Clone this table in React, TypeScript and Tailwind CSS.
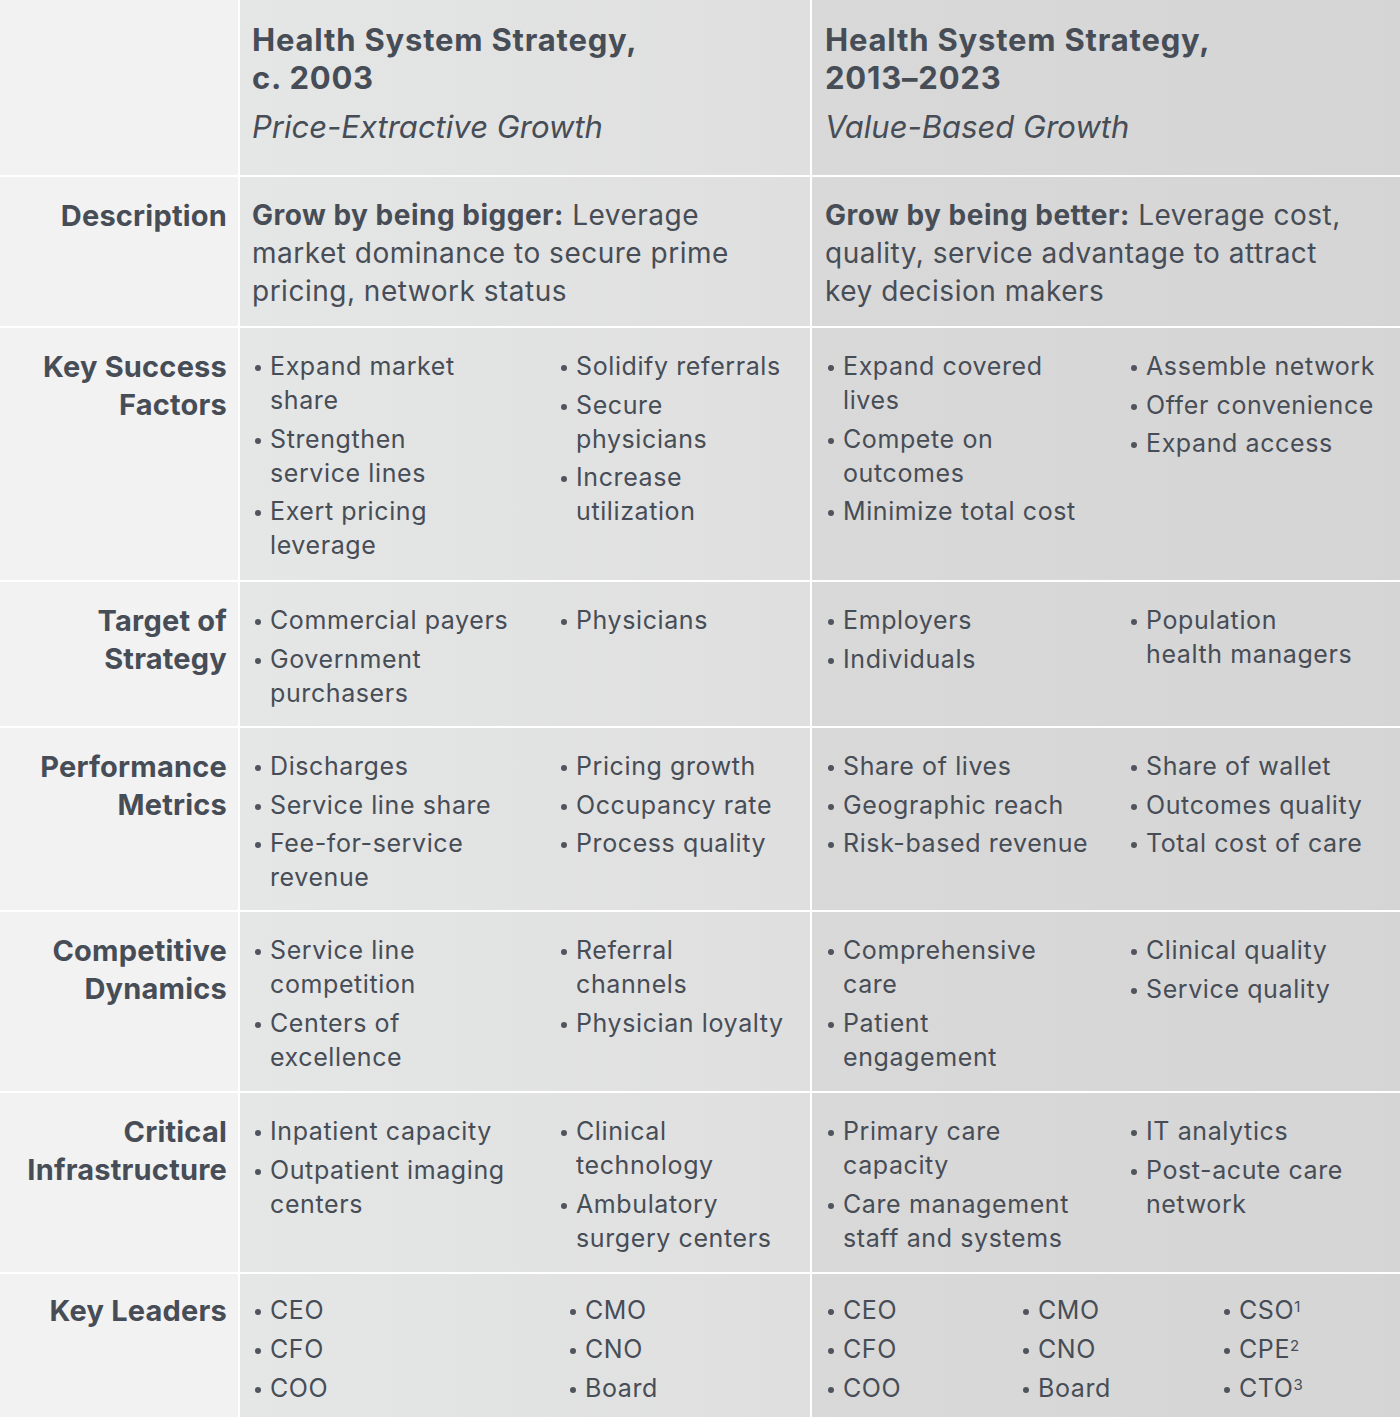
import React from "react";

const LABEL = "bg-[#f2f2f2]";
const COL1 = "bg-linear-to-r from-[#e5e6e6] to-[#dfdfdf]";
const COL2 = "bg-linear-to-r from-[#d9d9d9] to-[#d5d5d5]";

type Item = string[];

function Dot() {
  return (
    <div className="w-[18px] shrink-0">
      <div className="ml-[3px] mt-[16px] h-[6px] w-[6px] rounded-full bg-[#50555d]" />
    </div>
  );
}

function Bullets({ items }: { items: Item[] }) {
  return (
    <div className="flex flex-col gap-[4.5px]">
      {items.map((lines, i) => (
        <div key={i} className="flex">
          <Dot />
          <div>
            {lines.map((l) => (
              <div key={l} className="whitespace-nowrap">
                {l}
              </div>
            ))}
          </div>
        </div>
      ))}
    </div>
  );
}

function Label({ lines }: { lines: string[] }) {
  return (
    <div className={`${LABEL} pr-[11px] pt-[20px] text-right text-[29px] font-bold leading-[38px] tracking-[0.2px]`}>
      {lines.map((l) => (
        <div key={l}>{l}</div>
      ))}
    </div>
  );
}

function Split({
  bg,
  left,
  right,
  cols,
  pl,
}: {
  bg: string;
  left: Item[];
  right: Item[];
  cols: string;
  pl: string;
}) {
  return (
    <div className={`${bg} ${pl} grid ${cols} pt-[21px] text-[25px] leading-[34px] tracking-[0.6px]`}>
      <Bullets items={left} />
      <Bullets items={right} />
    </div>
  );
}

const rows: { label: string[]; a: [Item[], Item[]]; b: [Item[], Item[]] }[] = [
  {
    label: ["Key Success", "Factors"],
    a: [
      [["Expand market", "share"], ["Strengthen", "service lines"], ["Exert pricing", "leverage"]],
      [["Solidify referrals"], ["Secure", "physicians"], ["Increase", "utilization"]],
    ],
    b: [
      [["Expand covered", "lives"], ["Compete on", "outcomes"], ["Minimize total cost"]],
      [["Assemble network"], ["Offer convenience"], ["Expand access"]],
    ],
  },
  {
    label: ["Target of", "Strategy"],
    a: [[["Commercial payers"], ["Government", "purchasers"]], [["Physicians"]]],
    b: [[["Employers"], ["Individuals"]], [["Population", "health managers"]]],
  },
  {
    label: ["Performance", "Metrics"],
    a: [
      [["Discharges"], ["Service line share"], ["Fee-for-service", "revenue"]],
      [["Pricing growth"], ["Occupancy rate"], ["Process quality"]],
    ],
    b: [
      [["Share of lives"], ["Geographic reach"], ["Risk-based revenue"]],
      [["Share of wallet"], ["Outcomes quality"], ["Total cost of care"]],
    ],
  },
  {
    label: ["Competitive", "Dynamics"],
    a: [
      [["Service line", "competition"], ["Centers of", "excellence"]],
      [["Referral", "channels"], ["Physician loyalty"]],
    ],
    b: [
      [["Comprehensive", "care"], ["Patient", "engagement"]],
      [["Clinical quality"], ["Service quality"]],
    ],
  },
  {
    label: ["Critical", "Infrastructure"],
    a: [
      [["Inpatient capacity"], ["Outpatient imaging", "centers"]],
      [["Clinical", "technology"], ["Ambulatory", "surgery centers"]],
    ],
    b: [
      [["Primary care", "capacity"], ["Care management", "staff and systems"]],
      [["IT analytics"], ["Post-acute care", "network"]],
    ],
  },
];

function Leader({ name, sup }: { name: string; sup?: string }) {
  return (
    <div className="flex">
      <Dot />
      <div className="whitespace-nowrap">
        {name}
        {sup ? <sup className="text-[15px]">{sup}</sup> : null}
      </div>
    </div>
  );
}

function LeaderCol({ names }: { names: [string, string?][] }) {
  return (
    <div className="flex flex-col gap-[5px]">
      {names.map(([n, s]) => (
        <Leader key={n} name={n} sup={s} />
      ))}
    </div>
  );
}

export default function App() {
  return (
    <div
      className="grid h-[1417px] w-[1400px] grid-cols-[238px_570px_588px] grid-rows-[175px_149px_252px_144px_182px_179px_179px_143px] gap-[2px] bg-white text-[#474d56]"
      style={{ fontFamily: "Inter, 'Liberation Sans', sans-serif" }}
    >
      {/* header */}
      <div className={LABEL} />
      <div className={`${COL1} pl-[12px] pt-[21px]`}>
        <div className="text-[31px] font-bold leading-[38px] tracking-[0.8px]">
          <div>Health System Strategy,</div>
          <div>c. 2003</div>
        </div>
        <div className="mt-[11px] text-[31px] italic leading-[38px]">Price-Extractive Growth</div>
      </div>
      <div className={`${COL2} pl-[13px] pt-[21px]`}>
        <div className="text-[31px] font-bold leading-[38px] tracking-[0.8px]">
          <div>Health System Strategy,</div>
          <div>2013–2023</div>
        </div>
        <div className="mt-[11px] text-[31px] italic leading-[38px]">Value-Based Growth</div>
      </div>

      {/* description */}
      <Label lines={["Description"]} />
      <div className={`${COL1} pl-[12px] pt-[19px] text-[28px] leading-[38px] tracking-[0.5px]`}>
        <div>
          <span className="font-bold">Grow by being bigger:</span> Leverage
        </div>
        <div>market dominance to secure prime</div>
        <div>pricing, network status</div>
      </div>
      <div className={`${COL2} pl-[13px] pt-[19px] text-[28px] leading-[38px] tracking-[0.5px]`}>
        <div>
          <span className="font-bold">Grow by being better:</span> Leverage cost,
        </div>
        <div>quality, service advantage to attract</div>
        <div>key decision makers</div>
      </div>

      {rows.map((r) => (
        <React.Fragment key={r.label.join(" ")}>
          <Label lines={r.label} />
          <Split bg={COL1} pl="pl-[12px]" cols="grid-cols-[306px_1fr]" left={r.a[0]} right={r.a[1]} />
          <Split bg={COL2} pl="pl-[13px]" cols="grid-cols-[303px_1fr]" left={r.b[0]} right={r.b[1]} />
        </React.Fragment>
      ))}

      {/* key leaders */}
      <div className={`${LABEL} pr-[11px] pt-[18px] text-right text-[29px] font-bold leading-[38px] tracking-[0.2px]`}>
        Key Leaders
      </div>
      <div className={`${COL1} grid grid-cols-[315px_1fr] pl-[12px] pt-[19px] text-[25px] leading-[34px] tracking-[0.6px]`}>
        <LeaderCol names={[["CEO"], ["CFO"], ["COO"]]} />
        <LeaderCol names={[["CMO"], ["CNO"], ["Board"]]} />
      </div>
      <div className={`${COL2} grid grid-cols-[195px_201px_1fr] pl-[13px] pt-[19px] text-[25px] leading-[34px] tracking-[0.6px]`}>
        <LeaderCol names={[["CEO"], ["CFO"], ["COO"]]} />
        <LeaderCol names={[["CMO"], ["CNO"], ["Board"]]} />
        <LeaderCol names={[["CSO", "1"], ["CPE", "2"], ["CTO", "3"]]} />
      </div>
    </div>
  );
}
